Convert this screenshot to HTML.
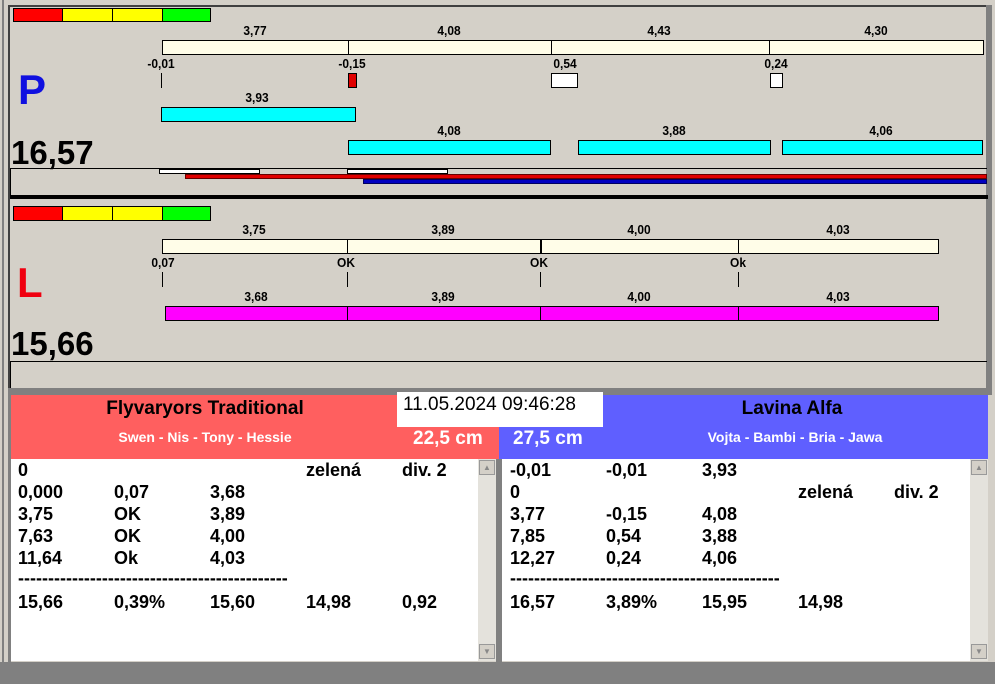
<!DOCTYPE html>
<html><head><meta charset="utf-8"><style>
body{margin:0;width:995px;height:684px;overflow:hidden;background:#d4d0c8;position:relative;font-family:"Liberation Sans",Arial,sans-serif;font-weight:bold;}
div{position:absolute;box-sizing:border-box;}
.t{font-size:13px;color:#000;white-space:nowrap;transform:translateX(-50%) scaleX(0.92);}
.cr{background:#fffde8;border:2px solid #000;}
.cy{background:#00ffff;border:1px solid #000;}
.mg{background:#ff00ff;border:1px solid #000;}
.vl{background:#000;width:1px;}
.row{font-size:18px;white-space:nowrap;}
</style></head><body>
<div style="left:2px;top:0;width:2px;height:662px;background:#808080"></div>
<div style="left:8px;top:5px;width:2px;height:386px;background:#404040"></div>
<div style="left:8px;top:5px;width:980px;height:2px;background:#404040"></div>
<div style="left:986px;top:5px;width:6px;height:390px;background:#808080"></div>

<div style="left:13px;top:8px;width:50px;height:14px;background:#f00;border:1px solid #000"></div>
<div style="left:62px;top:8px;width:51px;height:14px;background:#ff0;border:1px solid #000"></div>
<div style="left:112px;top:8px;width:51px;height:14px;background:#ff0;border:1px solid #000"></div>
<div style="left:162px;top:8px;width:49px;height:14px;background:#0f0;border:1px solid #000"></div>

<div class="t" style="left:255px;top:23px">3,77</div>
<div class="t" style="left:449px;top:23px">4,08</div>
<div class="t" style="left:659px;top:23px">4,43</div>
<div class="t" style="left:876px;top:23px">4,30</div>
<div class="cr" style="left:162px;top:40px;width:822px;height:15px;border-width:1px"></div>
<div class="vl" style="left:348px;top:40px;height:15px"></div>
<div class="vl" style="left:551px;top:40px;height:15px"></div>
<div class="vl" style="left:769px;top:40px;height:15px"></div>
<div class="t" style="left:161px;top:56px">-0,01</div>
<div class="t" style="left:352px;top:56px">-0,15</div>
<div class="t" style="left:565px;top:56px">0,54</div>
<div class="t" style="left:776px;top:56px">0,24</div>
<div class="vl" style="left:161px;top:73px;height:15px"></div>
<div style="left:348px;top:73px;width:9px;height:15px;background:#e00000;border:1px solid #000"></div>
<div style="left:551px;top:73px;width:27px;height:15px;background:#fff;border:1px solid #000"></div>
<div style="left:770px;top:73px;width:13px;height:15px;background:#fff;border:1px solid #000"></div>
<div class="t" style="left:257px;top:90px">3,93</div>
<div class="cy" style="left:161px;top:107px;width:195px;height:15px"></div>
<div class="t" style="left:449px;top:123px">4,08</div>
<div class="t" style="left:674px;top:123px">3,88</div>
<div class="t" style="left:881px;top:123px">4,06</div>
<div class="cy" style="left:348px;top:140px;width:203px;height:15px"></div>
<div class="cy" style="left:578px;top:140px;width:193px;height:15px"></div>
<div class="cy" style="left:782px;top:140px;width:201px;height:15px"></div>
<div style="left:18px;top:66px;font-size:42px;color:#1010e0;">P</div>
<div style="left:11px;top:134px;font-size:33px;color:#000;">16,57</div>
<div style="left:10px;top:168px;width:977px;height:1px;background:#000"></div>
<div style="left:10px;top:168px;width:1px;height:28px;background:#000"></div>
<div style="left:159px;top:169px;width:101px;height:5px;background:#fff;border:1px solid #000"></div>
<div style="left:347px;top:169px;width:101px;height:5px;background:#fff;border:1px solid #000"></div>
<div style="left:185px;top:174px;width:802px;height:5px;background:#e00000;border:1px solid #600"></div>
<div style="left:363px;top:179px;width:624px;height:5px;background:#0000c0;border:1px solid #000060"></div>
<div style="left:10px;top:195px;width:978px;height:4px;background:#000"></div>

<div style="left:13px;top:206px;width:50px;height:15px;background:#f00;border:1px solid #000"></div>
<div style="left:62px;top:206px;width:51px;height:15px;background:#ff0;border:1px solid #000"></div>
<div style="left:112px;top:206px;width:51px;height:15px;background:#ff0;border:1px solid #000"></div>
<div style="left:162px;top:206px;width:49px;height:15px;background:#0f0;border:1px solid #000"></div>
<div class="t" style="left:254px;top:222px">3,75</div>
<div class="t" style="left:443px;top:222px">3,89</div>
<div class="t" style="left:639px;top:222px">4,00</div>
<div class="t" style="left:838px;top:222px">4,03</div>
<div class="cr" style="left:162px;top:239px;width:777px;height:15px;border-width:1px"></div>
<div class="vl" style="left:347px;top:239px;height:15px"></div>
<div class="vl" style="left:540px;top:239px;height:15px;width:2px"></div>
<div class="vl" style="left:738px;top:239px;height:15px"></div>
<div class="t" style="left:163px;top:255px">0,07</div>
<div class="t" style="left:346px;top:255px">OK</div>
<div class="t" style="left:539px;top:255px">OK</div>
<div class="t" style="left:738px;top:255px">Ok</div>
<div class="vl" style="left:162px;top:272px;height:15px"></div>
<div class="vl" style="left:347px;top:272px;height:15px"></div>
<div class="vl" style="left:540px;top:272px;height:15px"></div>
<div class="vl" style="left:738px;top:272px;height:15px"></div>
<div class="t" style="left:256px;top:289px">3,68</div>
<div class="t" style="left:443px;top:289px">3,89</div>
<div class="t" style="left:639px;top:289px">4,00</div>
<div class="t" style="left:838px;top:289px">4,03</div>
<div class="mg" style="left:165px;top:306px;width:774px;height:15px"></div>
<div class="vl" style="left:347px;top:306px;height:15px"></div>
<div class="vl" style="left:540px;top:306px;height:15px"></div>
<div class="vl" style="left:738px;top:306px;height:15px"></div>
<div style="left:17px;top:259px;font-size:42px;color:#f00010;">L</div>
<div style="left:11px;top:325px;font-size:33px;color:#000;">15,66</div>
<div style="left:10px;top:361px;width:977px;height:1px;background:#000"></div>
<div style="left:10px;top:361px;width:1px;height:28px;background:#000"></div>

<div style="left:8px;top:388px;width:984px;height:7px;background:#808080"></div>
<div style="left:8px;top:388px;width:3px;height:274px;background:#808080"></div>
<div style="left:11px;top:395px;width:488px;height:64px;background:#ff5f5f"></div>
<div style="left:499px;top:395px;width:489px;height:64px;background:#5f5fff"></div>
<div style="left:397px;top:392px;width:206px;height:35px;background:#fff"></div>
<div style="left:403px;top:394px;font-size:19px;font-weight:normal;white-space:nowrap">11.05.2024 09:46:28</div>
<div class="t" style="left:205px;top:398px;font-size:19px;transform:translateX(-50%)">Flyvaryors Traditional</div>
<div class="t" style="left:205px;top:429px;font-size:14px;color:#fff;transform:translateX(-50%)">Swen - Nis - Tony - Hessie</div>
<div style="left:413px;top:428px;font-size:19px;color:#fff;white-space:nowrap">22,5 cm</div>
<div style="left:513px;top:428px;font-size:19px;color:#fff;white-space:nowrap">27,5 cm</div>
<div class="t" style="left:792px;top:398px;font-size:19px;transform:translateX(-50%)">Lavina Alfa</div>
<div class="t" style="left:795px;top:429px;font-size:14px;color:#fff;transform:translateX(-50%)">Vojta - Bambi - Bria - Jawa</div>

<div style="left:11px;top:459px;width:467px;height:202px;background:#fff"></div>
<div style="left:478px;top:459px;width:18px;height:202px;background:#e4e2dc"></div>
<div style="left:479px;top:460px;width:16px;height:15px;background:#d4d0c8;border:1px solid #999;font-size:8px;color:#888;text-align:center;line-height:13px">▲</div>
<div style="left:479px;top:644px;width:16px;height:15px;background:#d4d0c8;border:1px solid #999;font-size:8px;color:#888;text-align:center;line-height:13px">▼</div>
<div style="left:496px;top:459px;width:6px;height:203px;background:#808080"></div>
<div style="left:502px;top:459px;width:468px;height:202px;background:#fff"></div>
<div style="left:970px;top:459px;width:18px;height:202px;background:#e4e2dc"></div>
<div style="left:971px;top:460px;width:16px;height:15px;background:#d4d0c8;border:1px solid #999;font-size:8px;color:#888;text-align:center;line-height:13px">▲</div>
<div style="left:971px;top:644px;width:16px;height:15px;background:#d4d0c8;border:1px solid #999;font-size:8px;color:#888;text-align:center;line-height:13px">▼</div>
<div style="left:0;top:662px;width:995px;height:22px;background:#808080"></div>

<div class="row" style="left:18px;top:460px">0</div><div class="row" style="left:306px;top:460px">zelená</div><div class="row" style="left:402px;top:460px">div. 2</div>
<div class="row" style="left:18px;top:482px">0,000</div><div class="row" style="left:114px;top:482px">0,07</div><div class="row" style="left:210px;top:482px">3,68</div>
<div class="row" style="left:18px;top:504px">3,75</div><div class="row" style="left:114px;top:504px">OK</div><div class="row" style="left:210px;top:504px">3,89</div>
<div class="row" style="left:18px;top:526px">7,63</div><div class="row" style="left:114px;top:526px">OK</div><div class="row" style="left:210px;top:526px">4,00</div>
<div class="row" style="left:18px;top:548px">11,64</div><div class="row" style="left:114px;top:548px">Ok</div><div class="row" style="left:210px;top:548px">4,03</div>
<div class="row" style="left:18px;top:568px;width:270px;overflow:hidden">----------------------------------------------------</div>
<div class="row" style="left:18px;top:592px">15,66</div><div class="row" style="left:114px;top:592px">0,39%</div><div class="row" style="left:210px;top:592px">15,60</div><div class="row" style="left:306px;top:592px">14,98</div><div class="row" style="left:402px;top:592px">0,92</div>
<div class="row" style="left:510px;top:460px">-0,01</div><div class="row" style="left:606px;top:460px">-0,01</div><div class="row" style="left:702px;top:460px">3,93</div>
<div class="row" style="left:510px;top:482px">0</div><div class="row" style="left:798px;top:482px">zelená</div><div class="row" style="left:894px;top:482px">div. 2</div>
<div class="row" style="left:510px;top:504px">3,77</div><div class="row" style="left:606px;top:504px">-0,15</div><div class="row" style="left:702px;top:504px">4,08</div>
<div class="row" style="left:510px;top:526px">7,85</div><div class="row" style="left:606px;top:526px">0,54</div><div class="row" style="left:702px;top:526px">3,88</div>
<div class="row" style="left:510px;top:548px">12,27</div><div class="row" style="left:606px;top:548px">0,24</div><div class="row" style="left:702px;top:548px">4,06</div>
<div class="row" style="left:510px;top:568px;width:270px;overflow:hidden">----------------------------------------------------</div>
<div class="row" style="left:510px;top:592px">16,57</div><div class="row" style="left:606px;top:592px">3,89%</div><div class="row" style="left:702px;top:592px">15,95</div><div class="row" style="left:798px;top:592px">14,98</div>
</body></html>
